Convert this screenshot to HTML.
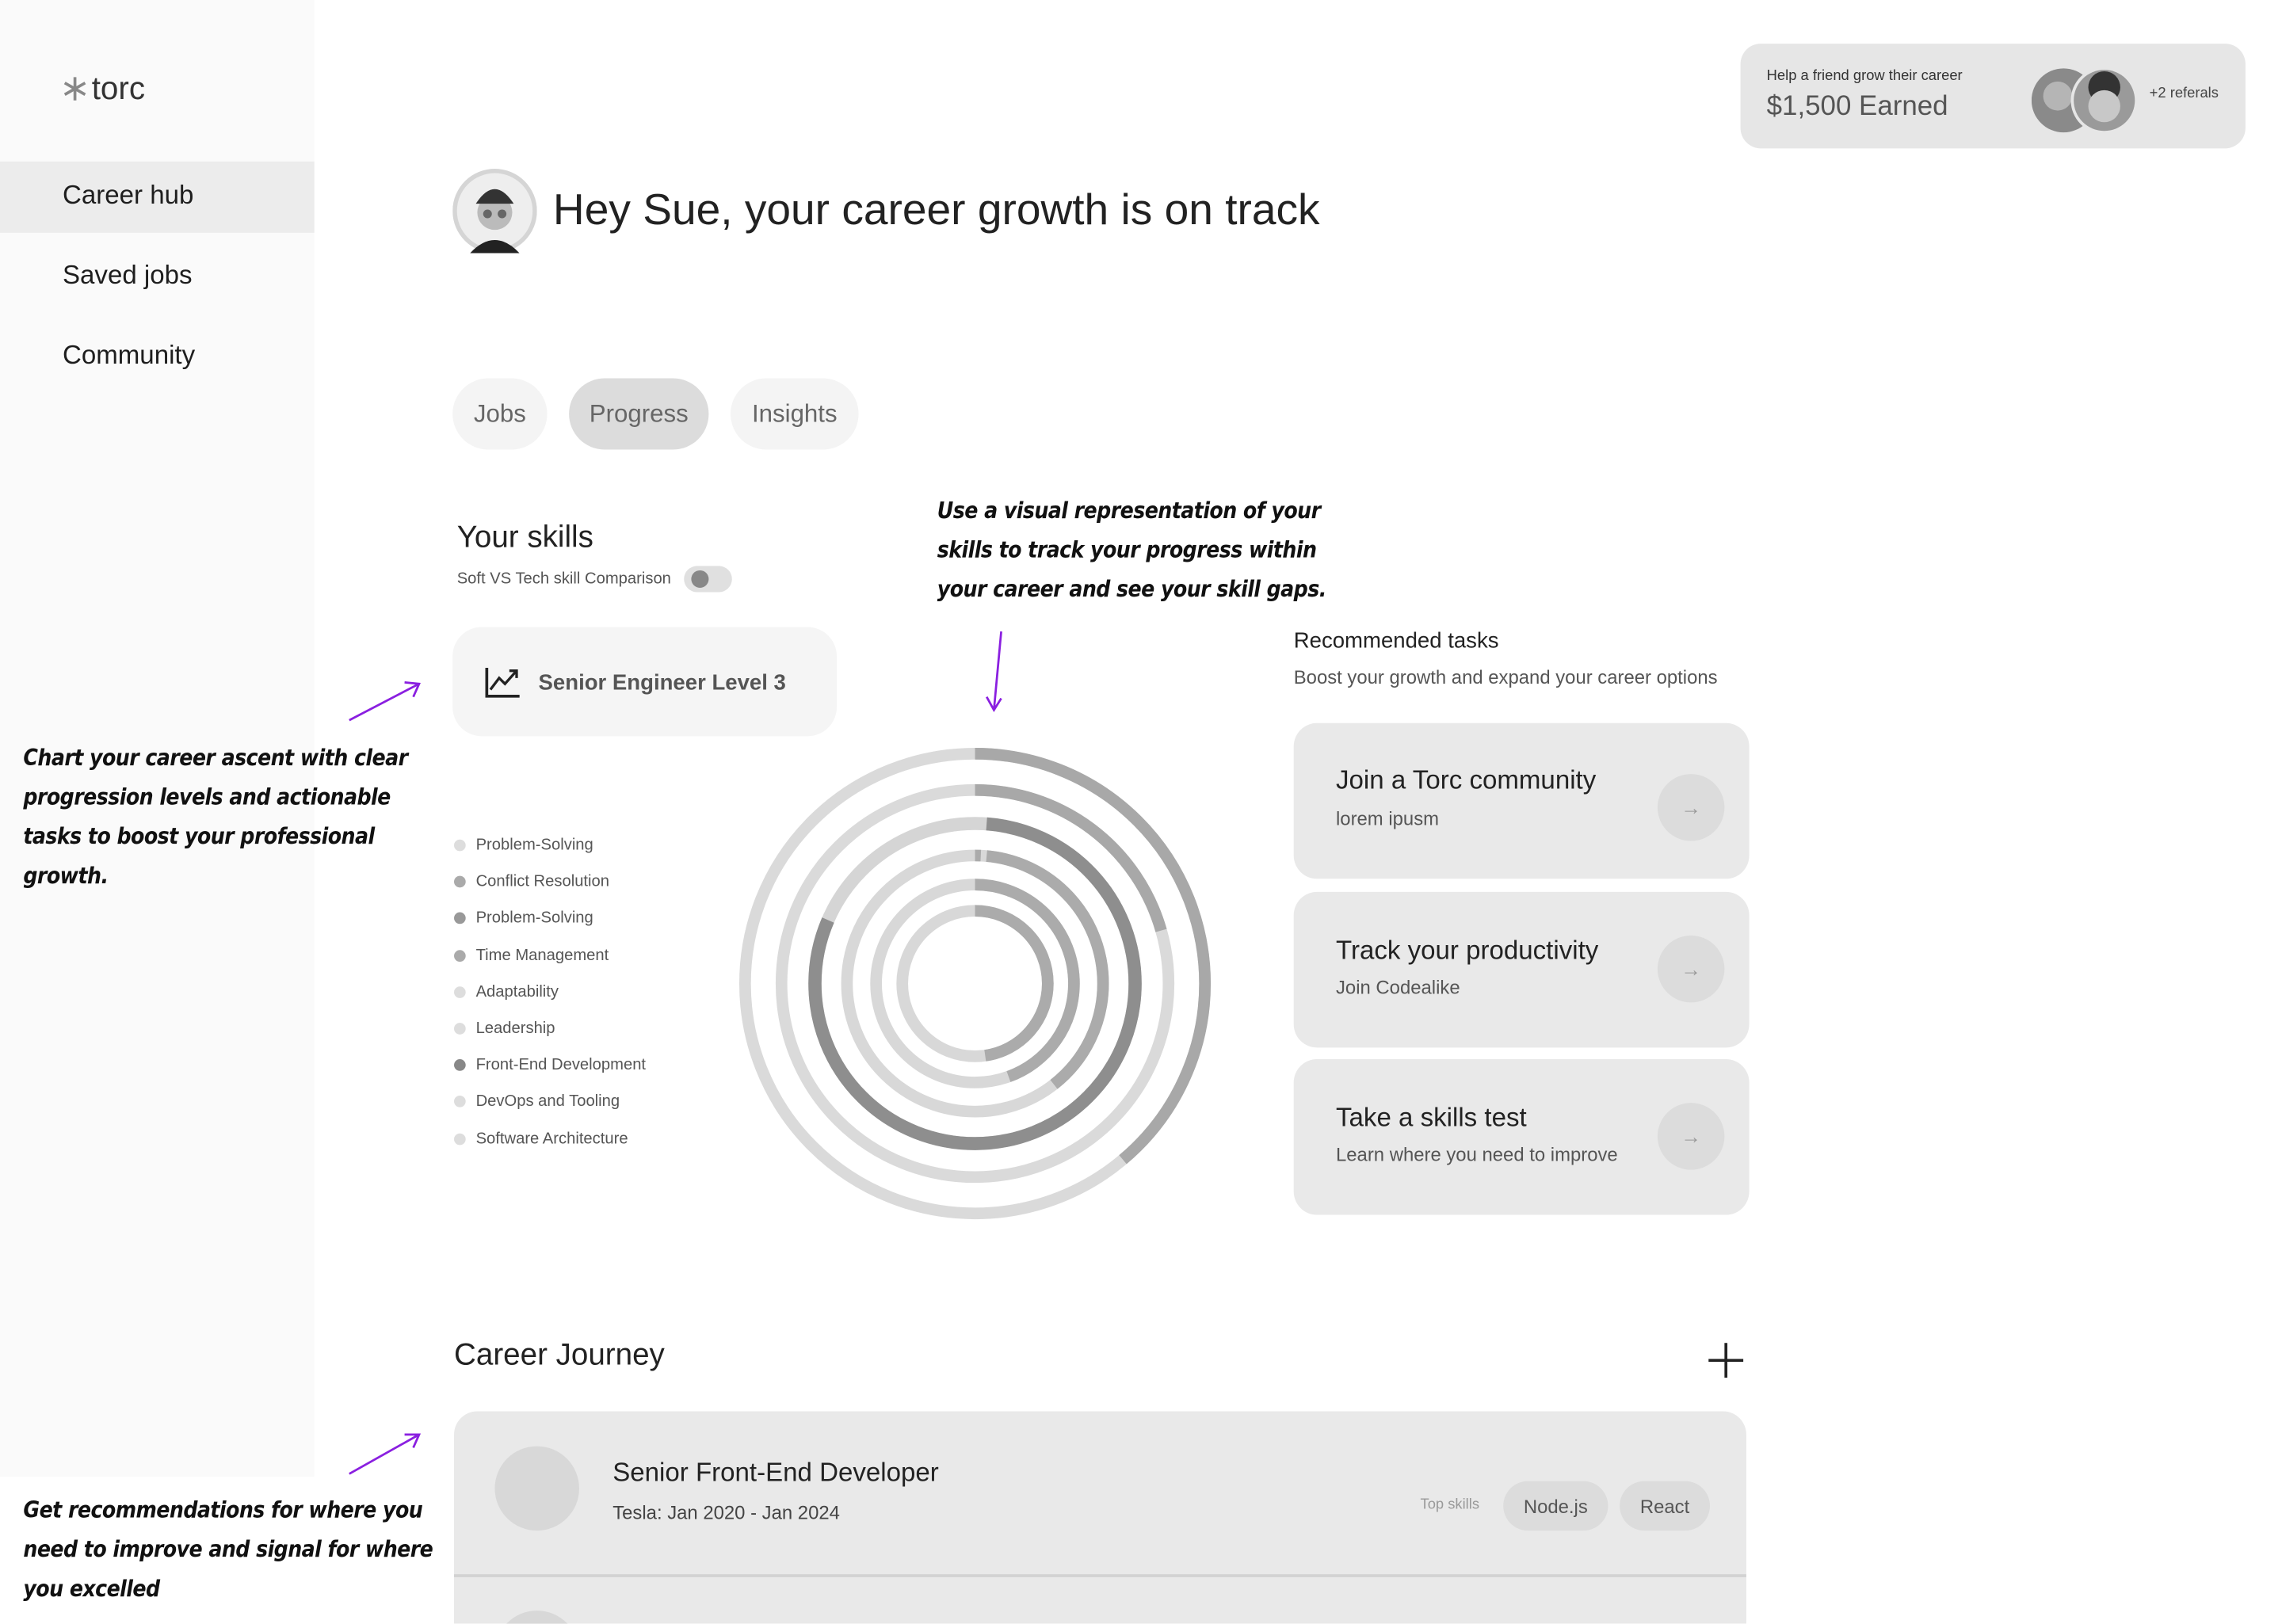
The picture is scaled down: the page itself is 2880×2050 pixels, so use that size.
<!DOCTYPE html>
<html><head><meta charset="utf-8">
<style>
html,body{margin:0;padding:0;background:#fff;overflow:hidden;}
body{width:2880px;height:2049px;}
#w{position:absolute;left:0;top:0;width:1568px;height:1116px;overflow:hidden;transform:scale(1.8366);transform-origin:0 0;font-family:"Liberation Sans",sans-serif;color:#222;}
.a{position:absolute;}
.side{left:0;top:0;width:216px;height:1015px;background:#fafafa;}
.nav{position:absolute;left:43px;font-size:18px;color:#1e1e1e;}
.hand{position:absolute;font-family:"DejaVu Sans Condensed","DejaVu Sans",sans-serif;font-weight:bold;font-style:italic;font-size:15.3px;line-height:27px;color:#111;letter-spacing:-0.3px;white-space:nowrap;}
.pill{position:absolute;top:260px;height:49px;border-radius:25px;background:#f4f4f4;font-size:17px;color:#666;display:flex;align-items:center;justify-content:center;}
.leg{position:absolute;left:312px;font-size:11px;color:#555;}
.leg i{position:absolute;left:0;top:2px;width:8px;height:8px;border-radius:50%;}
.leg span{position:absolute;left:15px;top:0;white-space:nowrap;}
.card{position:absolute;left:889px;width:313px;height:107px;background:#e9e9e9;border-radius:16px;}
.card .t{position:absolute;left:29px;top:29px;font-size:18px;color:#222;}
.card .s{position:absolute;left:29px;top:58px;font-size:13px;color:#555;}
.card .b{position:absolute;left:250px;top:35px;width:46px;height:46px;border-radius:50%;background:#dcdcdc;color:#999;font-size:14px;display:flex;align-items:center;justify-content:center;}
.tag{position:absolute;top:1018px;height:34px;border-radius:17px;background:#dcdcdc;font-size:13px;color:#555;display:flex;align-items:center;justify-content:center;}
</style></head><body><div id="w">
<div class="a side"></div>
<div class="a" style="left:43px;top:48px;font-size:22px;color:#333;">
<svg width="17" height="18" viewBox="0 0 17 18" style="vertical-align:-2px"><g stroke="#888" stroke-width="2"><line x1="8.5" y1="1" x2="8.5" y2="17"/><line x1="1.5" y1="5" x2="15.5" y2="13"/><line x1="1.5" y1="13" x2="15.5" y2="5"/></g></svg><span style="margin-left:3px">torc</span></div>
<div class="a" style="left:0;top:111px;width:216px;height:49px;background:#ececec;"></div>
<div class="nav" style="top:124px">Career hub</div>
<div class="nav" style="top:179px">Saved jobs</div>
<div class="nav" style="top:234px">Community</div>

<div class="a" style="left:1196px;top:30px;width:347px;height:72px;background:#e6e6e6;border-radius:14px;">
<div class="a" style="left:18px;top:17px;font-size:10px;color:#333;">Help a friend grow their career</div>
<div class="a" style="left:18px;top:33px;font-size:19px;color:#555;">$1,500 Earned</div>
<svg class="a" style="left:200px;top:16px" width="76" height="46"><circle cx="22" cy="23" r="22" fill="#8a8a8a"/><circle cx="18" cy="20" r="10" fill="#b5b5b5"/><circle cx="50" cy="23" r="23" fill="#e6e6e6"/><circle cx="50" cy="23" r="21" fill="#9a9a9a"/><circle cx="50" cy="14" r="11" fill="#333"/><circle cx="50" cy="27" r="11" fill="#c8c8c8"/></svg>
<div class="a" style="left:281px;top:29px;font-size:10px;color:#444;">+2 referals</div>
</div>

<svg class="a" style="left:311px;top:116px" width="58" height="58"><circle cx="29" cy="29" r="29" fill="#d5d5d5"/><circle cx="29" cy="29" r="26" fill="#eee"/><path d="M12 58 Q29 40 46 58Z" fill="#222"/><circle cx="29" cy="30" r="12" fill="#bbb"/><path d="M16 24 Q29 4 42 24 Z" fill="#333"/><circle cx="24" cy="31" r="3" fill="#666"/><circle cx="34" cy="31" r="3" fill="#666"/></svg>
<div class="a" style="left:380px;top:128px;font-size:30px;color:#222;white-space:nowrap;">Hey Sue, your career growth is on track</div>

<div class="pill" style="left:311px;width:65px;">Jobs</div>
<div class="pill" style="left:391px;width:96px;background:#dcdcdc;">Progress</div>
<div class="pill" style="left:502px;width:88px;">Insights</div>

<div class="a" style="left:314px;top:358px;font-size:21px;color:#222;">Your skills</div>
<div class="a" style="left:314px;top:392px;font-size:11px;color:#555;">Soft VS Tech skill Comparison</div>
<div class="a" style="left:470px;top:389px;width:33px;height:18px;border-radius:9px;background:#e0e0e0;"><div class="a" style="left:5px;top:3px;width:12px;height:12px;border-radius:50%;background:#888;"></div></div>

<div class="a" style="left:311px;top:431px;width:264px;height:75px;background:#f5f5f5;border-radius:20px;">
<svg class="a" style="left:22px;top:27px" width="25" height="22" viewBox="0 0 25 22"><path d="M1.5 1 V20.5 H24" fill="none" stroke="#222" stroke-width="2"/><path d="M4 16 L10 8 L14 12 L22 3 M17 3 H22 V8" fill="none" stroke="#222" stroke-width="1.8"/></svg>
<div class="a" style="left:59px;top:30px;font-size:15px;color:#555;font-weight:bold;">Senior Engineer Level 3</div>
</div>

<div class="hand" style="left:16px;top:508px;">Chart your career ascent with clear<br>progression levels and actionable<br>tasks to boost your professional<br>growth.</div>
<div class="hand" style="left:644px;top:338px;">Use a visual representation of your<br>skills to track your progress within<br>your career and see your skill gaps.</div>
<div class="hand" style="left:16px;top:1025px;">Get recommendations for where you<br>need to improve and signal for where<br>you excelled</div>
<svg class="a" style="left:0;top:0" width="1556" height="1107"><g stroke="#8a1fe0" stroke-width="1.5" fill="none"><path d="M240 495 L288 470 M278 469 L288 470 L284 479"/><path d="M688 434 L683 488 M678 479 L683 488 L688 480"/><path d="M240 1013 L288 986 M278 986 L288 986 L284 995"/></g></svg>

<div class="leg" style="top:575px"><i style="background:#ddd"></i><span>Problem-Solving</span></div>
<div class="leg" style="top:600px"><i style="background:#aaa"></i><span>Conflict Resolution</span></div>
<div class="leg" style="top:625px"><i style="background:#999"></i><span>Problem-Solving</span></div>
<div class="leg" style="top:651px"><i style="background:#aaa"></i><span>Time Management</span></div>
<div class="leg" style="top:676px"><i style="background:#ddd"></i><span>Adaptability</span></div>
<div class="leg" style="top:701px"><i style="background:#ddd"></i><span>Leadership</span></div>
<div class="leg" style="top:726px"><i style="background:#888"></i><span>Front-End Development</span></div>
<div class="leg" style="top:751px"><i style="background:#ddd"></i><span>DevOps and Tooling</span></div>
<div class="leg" style="top:777px"><i style="background:#ddd"></i><span>Software Architecture</span></div>

<svg class="a" style="left:500px;top:506px" width="340" height="340" viewBox="-170 -170 340 340">
<g fill="none" transform="rotate(-90)">
<circle r="158" stroke="#dadada" stroke-width="8"/>
<circle r="158" stroke="#a8a8a8" stroke-width="8" stroke-dasharray="386 2000"/>
<circle r="133" stroke="#dadada" stroke-width="8"/>
<circle r="133" stroke="#a8a8a8" stroke-width="8" stroke-dasharray="172 2000"/>
<circle r="110" stroke="#d5d5d5" stroke-width="9"/>
<circle r="110" stroke="#8e8e8e" stroke-width="9" stroke-dasharray="0 8 555 2000"/>
<circle r="88" stroke="#d8d8d8" stroke-width="8"/>
<circle r="88" stroke="#ababab" stroke-width="8" stroke-dasharray="4 4 210 2000"/>
<circle r="68" stroke="#d8d8d8" stroke-width="8"/>
<circle r="68" stroke="#ababab" stroke-width="8" stroke-dasharray="190 2000"/>
<circle r="50" stroke="#d8d8d8" stroke-width="8"/>
<circle r="50" stroke="#ababab" stroke-width="8" stroke-dasharray="150 2000"/>
</g></svg>

<div class="a" style="left:889px;top:432px;font-size:15px;color:#222;">Recommended tasks</div>
<div class="a" style="left:889px;top:458px;font-size:13px;color:#555;">Boost your growth and expand your career options</div>
<div class="card" style="top:497px"><div class="t">Join a Torc community</div><div class="s">lorem ipusm</div><div class="b" style="top:35px">→</div></div>
<div class="card" style="top:613px"><div class="t" style="top:30px">Track your productivity</div><div class="s" style="top:58px">Join Codealike</div><div class="b" style="top:30px">→</div></div>
<div class="card" style="top:728px"><div class="t" style="top:30px">Take a skills test</div><div class="s" style="top:58px">Learn where you need to improve</div><div class="b" style="top:30px">→</div></div>

<div class="a" style="left:312px;top:920px;font-size:21px;color:#222;">Career Journey</div>
<svg class="a" style="left:1174px;top:923px" width="24" height="24"><path d="M12 0V24M0 12H24" stroke="#222" stroke-width="2"/></svg>

<div class="a" style="left:312px;top:970px;width:888px;height:146px;background:#e9e9e9;border-radius:16px 16px 0 0;"></div>
<div class="a" style="left:312px;top:1082px;width:888px;height:2px;background:#d2d2d2;"></div>
<div class="a" style="left:340px;top:994px;width:58px;height:58px;border-radius:50%;background:#d8d8d8;"></div>
<div class="a" style="left:340px;top:1107px;width:58px;height:58px;border-radius:50%;background:#d8d8d8;"></div>
<div class="a" style="left:421px;top:1002px;font-size:18px;color:#222;">Senior Front-End Developer</div>
<div class="a" style="left:421px;top:1032px;font-size:13px;color:#444;">Tesla: Jan 2020 - Jan 2024</div>
<div class="a" style="left:976px;top:1029px;font-size:10px;color:#999;">Top skills</div>
<div class="tag" style="left:1033px;width:72px;">Node.js</div>
<div class="tag" style="left:1113px;width:62px;">React</div>
</div></body></html>
